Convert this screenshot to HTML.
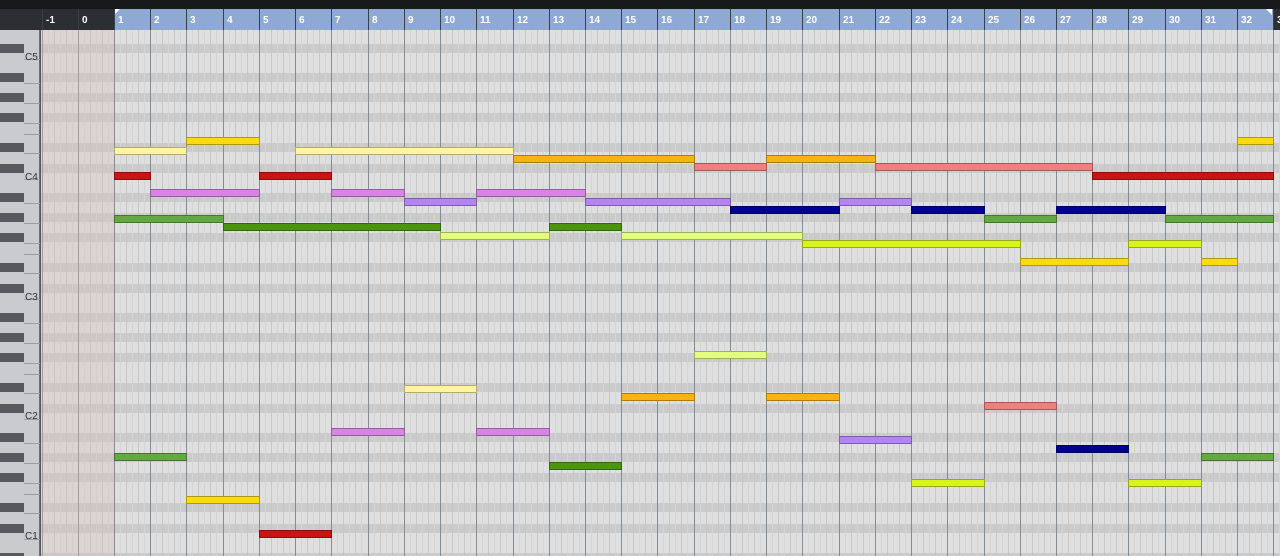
<!DOCTYPE html>
<html><head><meta charset="utf-8"><style>
*{margin:0;padding:0;box-sizing:border-box}
html,body{width:1280px;height:556px;overflow:hidden}
body{background:#dedede;position:relative;font-family:"Liberation Sans",sans-serif}
.a{position:absolute}
#top{left:0;top:0;width:1280px;height:9px;background:#17181a}
#rulerdark{left:0;top:9px;width:1280px;height:21px;background:#2b2e33}
#rulerblue{left:114px;top:9px;width:1159px;height:21px;background:#8eaad4}
.rl{top:9px;width:1px;height:21px;background:#3a3f48}
.rn{top:15px;font-size:10px;font-weight:bold;color:#fff}
#grid{left:41px;top:30px;width:1239px;height:526px;background:#dfdfdf}
#pink{left:41px;top:30px;width:73px;height:526px;background:rgba(215,190,190,.35);z-index:3}
.row{left:41px;width:1239px;height:9px;background:#cbcbcb}
.bl{top:30px;width:1px;height:526px;background:#868c95;z-index:2}
.beat{top:30px;width:1px;height:526px;background:#c6c6c6}
.beat2{top:30px;width:1px;height:526px;background:#d4d4d4}
#kb{left:0;top:30px;width:40px;height:526px;background:#c9cbce;border-right:1px solid #6b6e72}
#kbb{left:40px;top:30px;width:1px;height:526px;background:#55585c;z-index:4}
.bk{left:0;width:24px;height:9px;background:#56595d;z-index:5}
.wl{left:24px;width:16px;height:1px;background:#9a9da1;z-index:5}
.lab{left:25px;font-size:10px;color:#333;z-index:6}
.n{height:8px;border:1px solid rgba(0,0,0,.3);z-index:6}
</style></head><body>
<div id="top" class="a"></div>
<div id="rulerdark" class="a"></div>
<div id="rulerblue" class="a"></div>
<div class="a" style="left:114px;top:9px;width:0;height:0;border-top:6px solid #fff;border-right:6px solid transparent"></div>
<div class="a" style="left:1266px;top:9px;width:0;height:0;border-top:6px solid #fff;border-left:6px solid transparent"></div>
<div id="grid" class="a"></div>
<div id="kb" class="a"></div>
<div id="kbb" class="a"></div>
<div id="pink" class="a"></div>
<div id="dyn"></div>
<script>
var h='';
function bx(n){return Math.round(114+(n-1)*36.23);}
var offs=[0,29,49,69,99];
for(var k=-2;k<3;k++){offs.forEach(function(o){var y=284+120*k+o;if(y>20&&y<556){h+='<div class="a row" style="top:'+Math.max(y,30)+'px"></div>';h+='<div class="a bk" style="top:'+y+'px"></div>';}});}
for(var k=-2;k<3;k++){[15,39,59,79,90,109].forEach(function(o){var y=284+120*k+o;if(y>30&&y<556)h+='<div class="a wl" style="top:'+y+'px"></div>';});}
for(var n=-1;n<=34;n++){var x=bx(n);
 [1/3,2/3].forEach(function(f){var q=Math.round(x+f*36.23);if(q<1280)h+='<div class="a beat" style="left:'+q+'px"></div>';});
 [1/6,1/2,5/6].forEach(function(f){var q=Math.round(x+f*36.23);if(q<1280)h+='<div class="a beat2" style="left:'+q+'px"></div>';});
 if(x>=41&&x<1280){h+='<div class="a bl" style="left:'+x+'px"></div>';h+='<div class="a rl" style="left:'+x+'px"></div>';
 h+='<div class="a rn" style="left:'+(x+4)+'px">'+n+'</div>';}}
[['C5',52],['C4',172],['C3',292],['C2',411],['C1',531]].forEach(function(l){h+='<div class="a lab" style="top:'+l[1]+'px">'+l[0]+'</div>';});
var C={Y:'#f8dc10',P:'#fff4a0',O:'#f7b410',S:'#f08080',R:'#c81414',V:'#d884e4',U:'#b484f4',N:'#000090',G:'#64a844',D:'#4a9410',L:'#e2fe80',M:'#d8f41c'};
var notes=[
['Y',137,3,5],['Y',137,32,33],['P',147,1,3],['P',147,6,12],['O',155,12,17],['O',155,19,22],
['S',163,17,19],['S',163,22,28],['R',172,1,2],['R',172,5,7],['R',172,28,33],
['V',189,2,5],['V',189,7,9],['V',189,11,14],['U',198,9,11],['U',198,14,18],['U',198,21,23],
['N',206,18,21],['N',206,23,25],['N',206,27,30],['G',215,1,4],['G',215,25,27],['G',215,30,33],
['D',223,4,10],['D',223,13,15],['L',232,10,13],['L',232,15,20],['M',240,20,26],['M',240,29,31],
['Y',258,26,29],['Y',258,31,32],
['L',351,17,19],['P',385,9,11],['O',393,15,17],['O',393,19,21],['S',402,25,27],
['V',428,7,9],['V',428,11,13],['U',436,21,23],['N',445,27,29],['G',453,1,3],['G',453,31,33],
['D',462,13,15],['M',479,23,25],['M',479,29,31],['Y',496,3,5],['R',530,5,7]];
notes.forEach(function(t){var x1=bx(t[2]),x2=Math.min(bx(t[3]),1273);h+='<div class="a n" style="background:'+C[t[0]]+';top:'+t[1]+'px;left:'+x1+'px;width:'+(x2-x1+1)+'px"></div>';});
document.getElementById('dyn').innerHTML=h;
</script>
</body></html>
